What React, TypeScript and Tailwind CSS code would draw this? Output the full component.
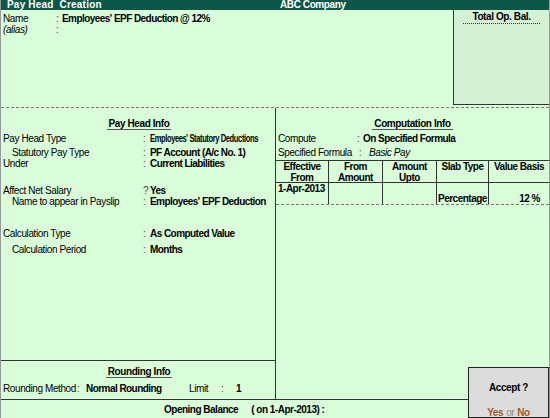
const font = "font-['Liberation_Sans',Arial,sans-serif]";

function Heading({ children }: { children: string }) {
  return (
    <div className="flex justify-center">
      <span className="inline-block border-b border-[#555] px-[2px] font-bold leading-[11px]">
        {children}
      </span>
    </div>
  );
}

type RowProps = {
  label: string;
  value: React.ReactNode;
  indent?: boolean;
  sep?: string;
  className?: string;
};

function InfoRow({ label, value, indent, sep = ":", className = "" }: RowProps) {
  return (
    <div className={`flex h-[11px] items-center ${className}`}>
      <div className={`w-[140px] shrink-0 ${indent ? "pl-[9px]" : ""}`}>{label}</div>
      <div className="w-[7px] shrink-0 text-[#444]">{sep}</div>
      <div className="font-bold tracking-[-0.55px]">{value}</div>
    </div>
  );
}

export default function App() {
  return (
    <div
      className={`relative flex h-[418px] w-[550px] flex-col overflow-hidden whitespace-nowrap border-x border-[#999] bg-[#d9fdd9] text-[10px] leading-[11px] tracking-[-0.4px] text-black ${font}`}
    >
      {/* title bar */}
      <div className="flex h-[10px] shrink-0 bg-[#0c5748] font-bold leading-[10px] text-white">
        <div className="w-[274px] pl-[6px] whitespace-pre tracking-[0.2px]">Pay Head  Creation</div>
        <div className="pl-[5px]">ABC Company</div>
      </div>

      {/* name area */}
      <div className="flex h-[98px] shrink-0 border-b border-dashed border-[#777]">
        <div className="flex-1 pl-[2px] pt-[3px]">
          <div className="flex h-[11px] items-center">
            <div className="w-[53px]">Name</div>
            <div className="w-[6px] text-[#444]">:</div>
            <div className="font-bold tracking-[-0.55px]">Employees' EPF Deduction @ 12%</div>
          </div>
          <div className="flex h-[11px] items-center">
            <div className="w-[53px] italic">(alias)</div>
            <div className="w-[6px] text-[#444]">:</div>
          </div>
        </div>
        <div className="h-[95px] w-[96px] border-b border-l border-[#333] bg-[#d4f0d5] pt-[1px]">
          <div className="mx-[9px] border-b border-dotted border-[#333] pb-[1px] text-center font-bold">
            Total Op. Bal.
          </div>
        </div>
      </div>

      {/* main area */}
      <div className="flex h-[291px] shrink-0">
        <div className="flex w-[275px] shrink-0 flex-col border-r border-[#333]">
          <div className="flex-1 pl-[2px] pt-[10px]">
            <Heading>Pay Head Info</Heading>
            <InfoRow
              className="mt-[3px]"
              label="Pay Head Type"
              value={
                <span className="inline-block origin-left scale-x-[0.76]">
                  Employees' Statutory Deductions
                </span>
              }
            />
            <InfoRow className="mt-[3px]" indent label="Statutory Pay Type" value="PF Account (A/c No. 1)" />
            <InfoRow label="Under" value="Current Liabilities" />
            <InfoRow className="mt-[16px]" label="Affect Net Salary" sep="?" value="Yes" />
            <InfoRow indent label="Name to appear in Payslip" value="Employees' EPF Deduction" />
            <InfoRow className="mt-[21px]" label="Calculation Type" value="As Computed Value" />
            <InfoRow className="mt-[5px]" indent label="Calculation Period" value="Months" />
          </div>
          <div className="h-[39px] shrink-0 border-t border-[#333] pl-[2px] pt-[5px]">
            <Heading>Rounding Info</Heading>
            <div className="mt-[5px] flex h-[11px] items-center">
              <div className="w-[74px]">Rounding Method</div>
              <div className="w-[9px] text-[#444]">:</div>
              <div className="w-[103px] font-bold tracking-[-0.55px]">Normal Rounding</div>
              <div className="w-[32px]">Limit</div>
              <div className="w-[15px] text-[#444]">:</div>
              <div className="font-bold">1</div>
            </div>
          </div>
        </div>

        <div className="flex-1 pt-[10px]">
          <Heading>Computation Info</Heading>
          <div className="mt-[3px] flex h-[11px] items-center pl-[2px]">
            <div className="w-[79px]">Compute</div>
            <div className="w-[6px] text-[#444]">:</div>
            <div className="font-bold tracking-[-0.55px]">On Specified Formula</div>
          </div>
          <div className="mt-[3px] flex h-[11px] items-center pl-[2px]">
            <div className="w-[81px]">Specified Formula</div>
            <div className="w-[10px] text-[#444]">:</div>
            <div className="italic">Basic Pay</div>
          </div>

          <div className="mt-[2px] grid grid-cols-[53px_54px_54px_52px_1fr] border-t border-b border-[#333] font-bold tracking-[-0.5px]">
            <div className="h-[21px] border-r border-[#333] text-center">Effective<br />From</div>
            <div className="h-[21px] border-r border-[#333] text-center">From<br />Amount</div>
            <div className="h-[21px] border-r border-[#333] text-center">Amount<br />Upto</div>
            <div className="h-[21px] border-r border-[#333] text-center">Slab Type</div>
            <div className="h-[21px] text-center">Value Basis</div>
          </div>
          <div className="grid grid-cols-[53px_54px_54px_52px_1fr] border-b border-dashed border-[#777] font-bold tracking-[-0.5px]">
            <div className="h-[21px] border-r border-[#333] pl-[2px]">1-Apr-2013</div>
            <div className="h-[21px] border-r border-[#333]" />
            <div className="h-[21px] border-r border-[#333]" />
            <div className="flex h-[21px] items-end border-r border-[#333] pl-[1px]">Percentage</div>
            <div className="flex h-[21px] items-end justify-end pr-[9px]">12 %</div>
          </div>
        </div>
      </div>

      {/* opening balance bar */}
      <div className="flex h-[19px] shrink-0 items-center border-t border-[#333] pl-[163px] font-bold tracking-[-0.5px]">
        <span>Opening Balance</span>
        <span className="ml-[13px]">( on 1-Apr-2013) :</span>
      </div>

      {/* accept prompt */}
      <div className="absolute bottom-0 right-0 flex h-[51px] w-[81px] flex-col items-center border border-[#222] bg-[#dcdcdc] font-bold">
        <div className="mt-[14px]">Accept ?</div>
        <div className="mt-[14px] flex gap-[3px] leading-[11px]">
          <span className="text-[#a65a2a]">Yes</span>
          <span className="font-normal text-[#8a8a8a]">or</span>
          <span className="text-[#a65a2a]">No</span>
        </div>
      </div>
    </div>
  );
}
